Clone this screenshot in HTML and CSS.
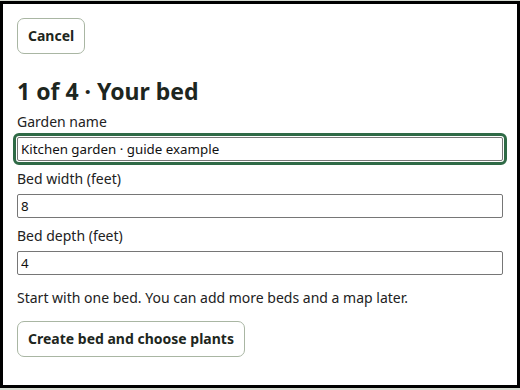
FILE: index.html
```html
<!DOCTYPE html>
<html lang="en">

<head>
    <meta charset="UTF-8">
    <meta name="viewport" content="width=device-width, initial-scale=1.0">
    <title>New bed</title>
    <link rel="stylesheet" href="styles.css">
</head>

<body>
    <div class="sheet">
        <button class="btn">Cancel</button>

        <h1 class="step-title">1 of 4 · Your bed</h1>

        <div class="field">
            <label for="gardenName">Garden name</label>
            <input id="gardenName" class="is-focused" type="text" value="Kitchen garden · guide example">
        </div>
        <div class="field">
            <label for="bedWidth">Bed width (feet)</label>
            <input id="bedWidth" type="text" value="8">
        </div>
        <div class="field">
            <label for="bedDepth">Bed depth (feet)</label>
            <input id="bedDepth" type="text" value="4">
        </div>

        <p class="hint">Start with one bed. You can add more beds and a map later.</p>

        <button class="btn">Create bed and choose plants</button>
    </div>
</body>

</html>
```

FILE: styles.css
```css
html, body {
    margin: 0;
    height: 100%;
}

body {
    padding-top: 1px;
    box-sizing: border-box;
    background: #d6dbd2; /* page behind the dialog */
    font-family: "Noto Sans", "DejaVu Sans", sans-serif;
    color: #1d2620;
}

.sheet {
    box-sizing: border-box;
    width: 520px;
    height: 387px;
    border: 3px solid #000;
    background: #fff;
    padding: 14px;
}

.btn {
    display: block;
    box-sizing: border-box;
    height: 36px;
    padding: 0 10px 2px;
    border: 1px solid #a9b6a3;
    border-radius: 7px;
    background: #fff;
    color: #1d2620;
    font-family: inherit;
    font-size: 14px;
    font-weight: 700;
    cursor: pointer;
}

.step-title {
    margin: 21px 0 5px;
    font-size: 23px;
    line-height: 32px;
    font-weight: 700;
}

.field {
    margin-bottom: 8px;
}

.field label {
    display: block;
    font-size: 14px;
    line-height: 20px;
    margin-bottom: 5px;
    color: #222;
}

.field input {
    display: block;
    box-sizing: border-box;
    width: 100%;
    height: 24px;
    margin: 0;
    padding: 1px 3px;
    border: 1px solid #767676;
    border-radius: 2px;
    font-family: inherit;
    font-size: 13.33px;
    color: #111;
}

.field input.is-focused {
    outline: 3px solid #2f6a46;
    outline-offset: 1px;
}

.hint {
    margin: 13px 0 13px;
    font-size: 14px;
    line-height: 20px;
    color: #222;
}
```
